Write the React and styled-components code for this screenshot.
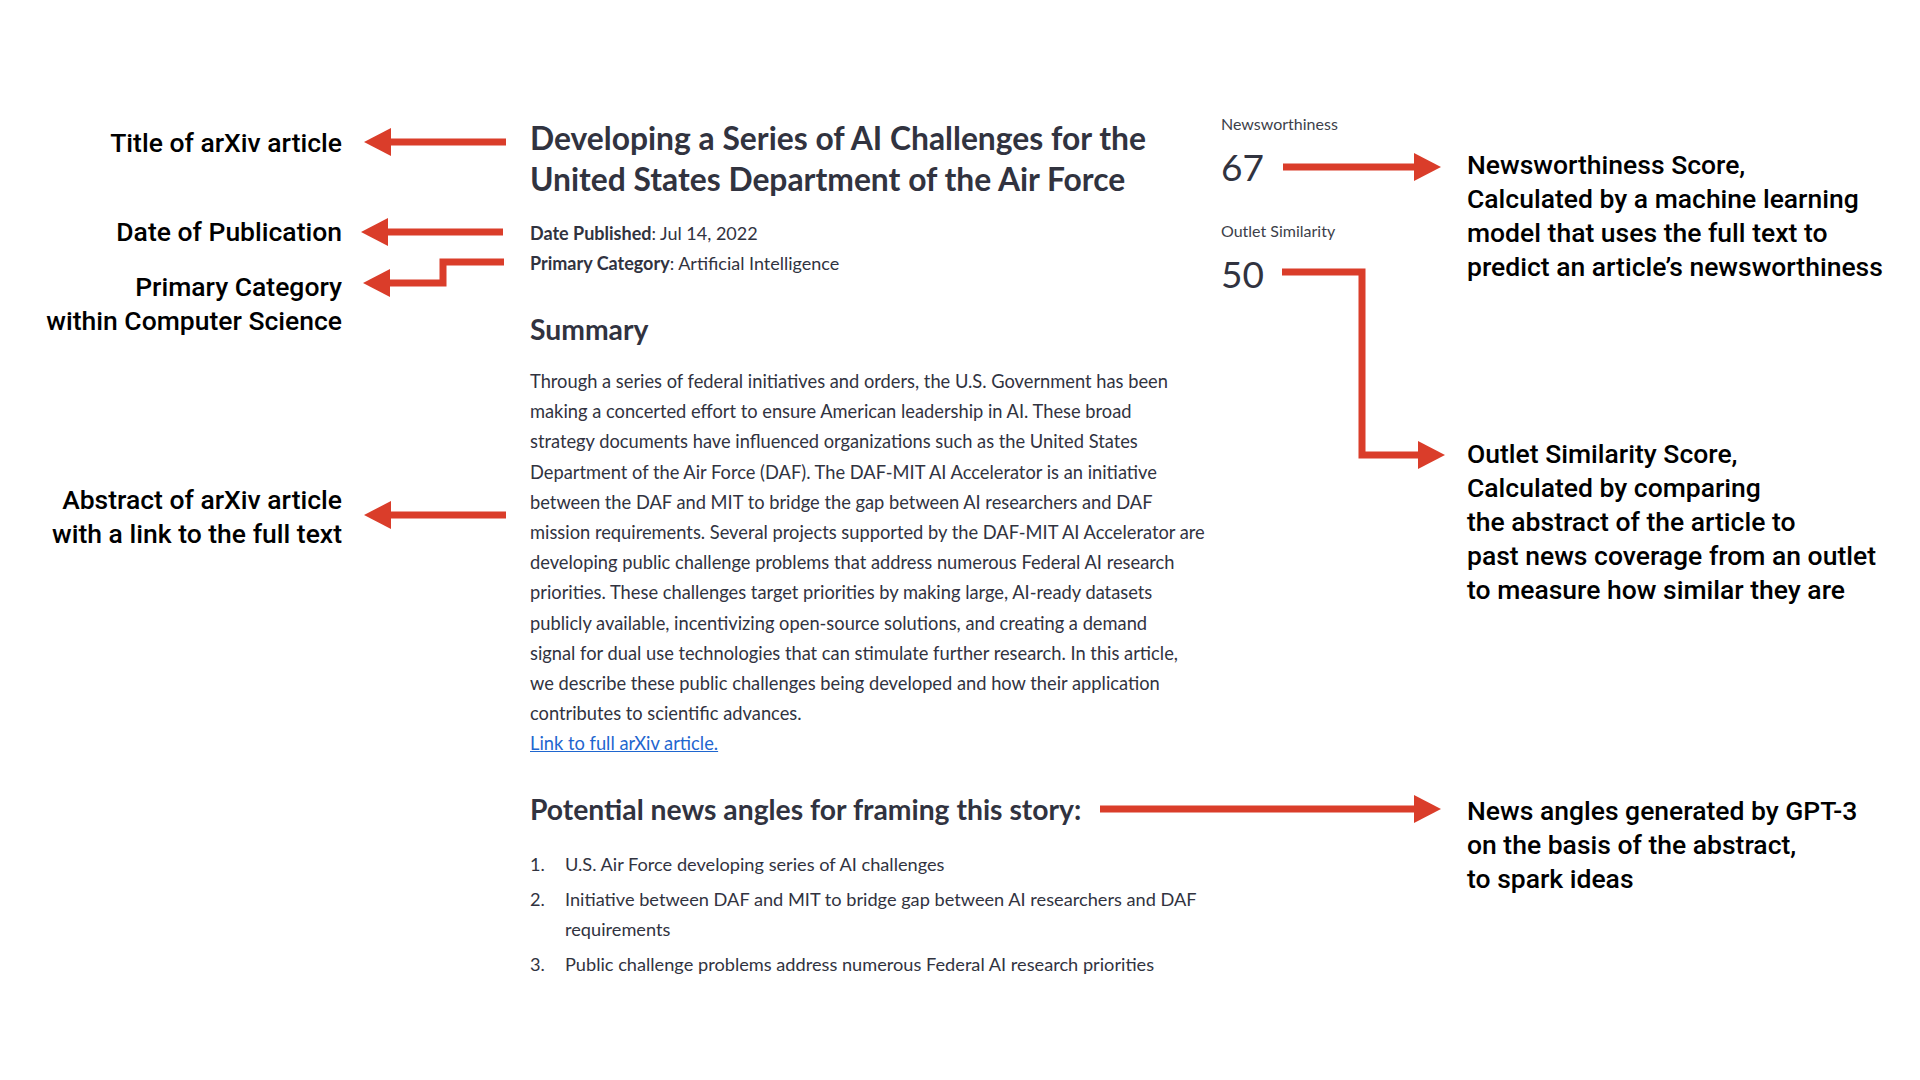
import styled, { createGlobalStyle } from "styled-components";

const GlobalStyle = createGlobalStyle`
  html, body {
    margin: 0;
    padding: 0;
    background: #fff;
  }
`;

const RED = "#da3d2a";
const INK = "#31333f";

const abstractLines = [
  "Through a series of federal initiatives and orders, the U.S. Government has been",
  "making a concerted effort to ensure American leadership in AI. These broad",
  "strategy documents have influenced organizations such as the United States",
  "Department of the Air Force (DAF). The DAF-MIT AI Accelerator is an initiative",
  "between the DAF and MIT to bridge the gap between AI researchers and DAF",
  "mission requirements. Several projects supported by the DAF-MIT AI Accelerator are",
  "developing public challenge problems that address numerous Federal AI research",
  "priorities. These challenges target priorities by making large, AI-ready datasets",
  "publicly available, incentivizing open-source solutions, and creating a demand",
  "signal for dual use technologies that can stimulate further research. In this article,",
  "we describe these public challenges being developed and how their application",
  "contributes to scientific advances.",
];

const angles = [
  "U.S. Air Force developing series of AI challenges",
  "Initiative between DAF and MIT to bridge gap between AI researchers and DAF requirements",
  "Public challenge problems address numerous Federal AI research priorities",
];

// connectors between the notes and the page parts
const arrows = [
  { line: [[506, 142], [390, 142]], tip: [364, 142] },
  { line: [[503, 232], [387, 232]], tip: [361, 232] },
  { line: [[504, 262], [443, 262], [443, 283], [389, 283]], tip: [363, 283] },
  { line: [[506, 515], [390, 515]], tip: [364, 515] },
  { line: [[1283, 167], [1414, 167]], tip: [1441, 167] },
  { line: [[1282, 272], [1362, 272], [1362, 455], [1418, 455]], tip: [1445, 455] },
  { line: [[1100, 809], [1414, 809]], tip: [1441, 809] },
];

function Arrow({ line, tip }) {
  const last = line[line.length - 1];
  const dir = tip[0] < last[0] ? -1 : 1;
  const bx = tip[0] - dir * 27;
  const head = `${tip[0]},${tip[1]} ${bx},${tip[1] - 14} ${bx},${tip[1] + 14}`;
  return (
    <>
      <polyline
        points={line.map((p) => p.join(",")).join(" ")}
        fill="none"
        stroke={RED}
        strokeWidth="7"
        strokeLinejoin="miter"
      />
      <polygon points={head} fill={RED} />
    </>
  );
}

export default function App() {
  return (
    <>
      <GlobalStyle />
      <Page>
        <LeftNotes>
          <Note>Title of arXiv article</Note>
          <Note $gap={55}>Date of Publication</Note>
          <Note $gap={21}>
            Primary Category
            <br />
            within Computer Science
          </Note>
          <Note $gap={145}>
            Abstract of arXiv article
            <br />
            with a link to the full text
          </Note>
        </LeftNotes>

        <Article>
          <Title>
            Developing a Series of AI Challenges for the
            <br />
            United States Department of the Air Force
          </Title>
          <Meta>
            <MetaRow>
              <b>Date Published</b>: Jul 14, 2022
            </MetaRow>
            <MetaRow>
              <b>Primary Category</b>: Artificial Intelligence
            </MetaRow>
          </Meta>
          <Heading $gap={33}>Summary</Heading>
          <Abstract>
            {abstractLines.map((l, i) => (
              <Line key={i}>{l}</Line>
            ))}
          </Abstract>
          <FullLink href="#">Link to full arXiv article.</FullLink>
          <Heading $gap={33}>Potential news angles for framing this story:</Heading>
          <AngleList>
            {angles.map((a, i) => (
              <Angle key={i}>
                <Num>{i + 1}.</Num>
                <span>{a}</span>
              </Angle>
            ))}
          </AngleList>
        </Article>

        <Scores>
          <ScoreLabel>Newsworthiness</ScoreLabel>
          <ScoreValue>67</ScoreValue>
          <ScoreLabel $gap={31}>Outlet Similarity</ScoreLabel>
          <ScoreValue>50</ScoreValue>
        </Scores>

        <RightNotes>
          <Note>
            Newsworthiness Score,
            <br />
            Calculated by a machine learning
            <br />
            model that uses the full text to
            <br />
            predict an article’s newsworthiness
          </Note>
          <Note $gap={153}>
            Outlet Similarity Score,
            <br />
            Calculated by comparing
            <br />
            the abstract of the article to
            <br />
            past news coverage from an outlet
            <br />
            to measure how similar they are
          </Note>
          <Note $gap={187}>
            News angles generated by GPT-3
            <br />
            on the basis of the abstract,
            <br />
            to spark ideas
          </Note>
        </RightNotes>

        <Connectors width="1920" height="1080" viewBox="0 0 1920 1080">
          {arrows.map((a, i) => (
            <Arrow key={i} line={a.line} tip={a.tip} />
          ))}
        </Connectors>
      </Page>
    </>
  );
}

const Page = styled.div`
position: relative;
width: 1920px;
height: 1080px;
display: flex;
align-items: flex-start;
overflow: hidden;
background: #fff;
`
const LeftNotes = styled.div`
width: 342px;
flex-shrink: 0;
padding-top: 126px;
text-align: right;
`
const RightNotes = styled.div`
flex: 1;
padding-top: 148px;
text-align: left;
`
const Note = styled.p`
margin: ${(p) => p.$gap || 0}px 0 0 0;
font-family: Roboto, "Liberation Sans", sans-serif;
font-weight: 500;
font-size: 26.5px;
line-height: 34px;
color: #000;
white-space: nowrap;
`
const Article = styled.div`
width: 680px;
flex-shrink: 0;
margin-left: 188px;
padding-top: 118px;
font-family: Lato, "Liberation Sans", sans-serif;
color: ${INK};
`
const Title = styled.h1`
margin: 0;
font-size: 31.8px;
font-weight: 700;
line-height: 41px;
color: ${INK};
white-space: nowrap;
`
const Meta = styled.div`
margin-top: 18px;
`
const MetaRow = styled.div`
font-size: 18px;
line-height: 30px;
b {
  font-weight: 700;
}
`
const Heading = styled.h2`
margin: ${(p) => p.$gap}px 0 0 0;
font-size: 28.3px;
font-weight: 700;
line-height: 36px;
color: ${INK};
white-space: nowrap;
`
const Abstract = styled.p`
margin: 19px 0 0 0;
font-size: 18.3px;
line-height: 30.2px;
`
const Line = styled.span`
display: block;
white-space: nowrap;
`
const FullLink = styled.a`
display: inline-block;
font-size: 18.3px;
line-height: 30px;
color: #1f66cf;
text-decoration: underline;
`
const AngleList = styled.ol`
list-style: none;
margin: 22px 0 0 0;
padding: 0;
`
const Angle = styled.li`
display: flex;
font-size: 18.2px;
line-height: 30px;
margin-bottom: 5px;
`
const Num = styled.span`
width: 35px;
flex-shrink: 0;
`
const Scores = styled.div`
width: 246px;
flex-shrink: 0;
margin-left: 11px;
padding-top: 114px;
font-family: Lato, "Liberation Sans", sans-serif;
color: ${INK};
`
const ScoreLabel = styled.div`
margin-top: ${(p) => p.$gap || 0}px;
font-size: 16px;
line-height: 20px;
color: #3d3f4a;
`
const ScoreValue = styled.div`
margin-top: 10px;
font-size: 37px;
line-height: 46px;
`
const Connectors = styled.svg`
position: absolute;
left: 0;
top: 0;
pointer-events: none;
`
